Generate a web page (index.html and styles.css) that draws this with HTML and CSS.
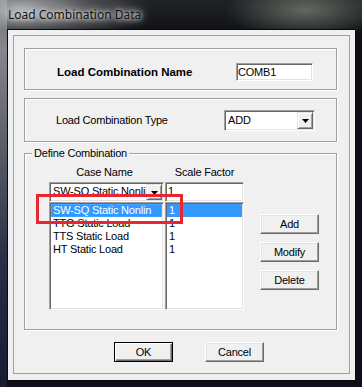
FILE: index.html
```html
<!DOCTYPE html>
<html>
<head>
	<title>Load Combination Data</title>
	<link rel="stylesheet" href="styles.css">
</head>
<body>
	<div class="window">
		<div class="titlebar">Load Combination Data</div>
		<div class="client">
			<div class="panel">
				<div class="group group-name">
					<span class="label-bold">Load Combination Name</span>
					<div class="field name-field">COMB1</div>
				</div>
				<div class="group group-type">
					<span>Load Combination Type</span>
					<div class="field combo type-combo">
						<span class="combo-text">ADD</span>
						<span class="drop-btn"><svg width="7" height="4" viewBox="0 0 7 4"><polygon points="0,0 7,0 3.5,4" fill="#000"/></svg></span>
					</div>
				</div>
				<fieldset class="define">
					<legend>Define Combination</legend>
					<div class="define-body">
						<div class="col case-col">
							<div class="col-head">Case Name</div>
							<div class="field combo case-combo">
								<span class="combo-text">SW-SQ Static Nonlin</span>
								<span class="drop-btn"><svg width="7" height="4" viewBox="0 0 7 4"><polygon points="0,0 7,0 3.5,4" fill="#000"/></svg></span>
							</div>
							<ul class="field list">
								<li class="selected focused">SW-SQ Static Nonlin</li>
								<li>TTG Static Load</li>
								<li>TTS Static Load</li>
								<li>HT Static Load</li>
							</ul>
						</div>
						<div class="col factor-col">
							<div class="col-head">Scale Factor</div>
							<div class="field factor-field">1</div>
							<ul class="field list">
								<li class="selected">1</li>
								<li>1</li>
								<li>1</li>
								<li>1</li>
							</ul>
						</div>
						<div class="side-buttons">
							<button class="btn">Add</button>
							<button class="btn">Modify</button>
							<button class="btn">Delete</button>
						</div>
					</div>
				</fieldset>
				<div class="footer">
					<button class="btn default">OK</button>
					<button class="btn">Cancel</button>
				</div>
			</div>
		</div>
		<div class="mark"></div>
	</div>
</body>
</html>
```

FILE: styles.css
```css
* {
	margin: 0;
	padding: 0;
	box-sizing: border-box;
}
body {
	background: #0e1118;
	font-family: "Liberation Sans", Arial, sans-serif;
	font-size: 11px;
	letter-spacing: -0.2px;
	color: #000;
}

/* window frame */
div.window {
	position: relative;
	width: 362px;
	height: 387px;
	padding: 0 6px 6px 7px;
	display: flex;
	flex-direction: column;
	background:
		radial-gradient(130px 42px at 20px 8px, rgba(175,177,180,.95), rgba(110,112,116,.55) 55%, transparent 100%),
		radial-gradient(80px 30px at 305px 10px, rgba(120,130,115,.75), transparent),
		linear-gradient(to bottom, #9a9c9f 0, #6a6d72 110px, #2b2e44 260px, #181a32 387px) left top / 7px 100% no-repeat,
		linear-gradient(to bottom, #202226 0, #0c0e13 40px, #0c0e1c 387px);
}
div.titlebar {
	height: 29px;
	padding: 1px 0 0 1px;
	line-height: 28px;
	font-family: "Noto Sans", "Open Sans", sans-serif;
	font-size: 12px;
	letter-spacing: 0;
	color: #111;
	text-shadow: 0 0 4px #fff, 0 0 8px rgba(255,255,255,.9), 0 0 14px rgba(255,255,255,.6);
}
div.client {
	flex: 1;
	border: 1px solid #0a0a0a;
	background: #f0f0f0;
	padding: 5px 5px 6px;
}
div.panel {
	height: 100%;
	border: 1px solid #a0a0a0;
	padding: 12px 12px 0 10px;
}

/* group boxes */
div.group {
	height: 42px;
	border: 1px solid #a0a0a0;
	box-shadow: inset 1px 1px #fff, 1px 1px #fff;
	display: flex;
	align-items: center;
	justify-content: space-between;
}
div.group-name {
	padding: 5px 23px 0 32px;
}
div.group-type {
	height: 44px;
	margin-top: 8px;
	padding: 0 21px 0 31px;
}
span.label-bold {
	font-weight: bold;
	font-size: 11.5px;
	letter-spacing: 0;
}

/* fields */
.field {
	background: #fff;
	border: 1px solid;
	border-color: #a0a0a0 #fff #fff #a0a0a0;
	box-shadow: inset 1px 1px #696969, inset -1px -1px #e3e3e3;
}
div.name-field {
	width: 77px;
	height: 18px;
	line-height: 16px;
	padding-left: 1px;
}
div.combo {
	display: flex;
	padding: 1px;
}
span.combo-text {
	flex: 1;
	padding-left: 2px;
	overflow: hidden;
	white-space: nowrap;
	line-height: 16px;
}
span.drop-btn {
	width: 16px;
	display: flex;
	align-items: center;
	justify-content: center;
	background: #f0f0f0;
	border: 1px solid;
	border-color: #e3e3e3 #696969 #696969 #e3e3e3;
	box-shadow: inset 1px 1px #fff, inset -1px -1px #a0a0a0;
}
span.drop-btn svg {
	display: block;
	margin-top: 1px;
}
div.type-combo {
	width: 91px;
	height: 21px;
}

/* define combination */
fieldset.define {
	margin-top: 4px;
	height: 184px;
	border: 1px solid #a0a0a0;
	box-shadow: inset 1px 1px #fff, 1px 1px #fff;
	min-width: 0;
}
fieldset.define legend {
	margin-left: 7px;
	padding: 0 2px;
	line-height: 14px;
	background: #f0f0f0;
}
div.define-body {
	display: flex;
	padding-left: 24px;
}
div.case-col {
	width: 115px;
}
div.factor-col {
	width: 79px;
	margin-left: 1px;
}
div.col-head {
	height: 22px;
	padding-top: 6px;
	line-height: 13px;
	text-align: center;
}
div.case-col div.col-head {
	padding-right: 4px;
}
div.case-combo {
	height: 20px;
}
div.case-combo span.combo-text {
	line-height: 15px;
}
div.factor-field {
	height: 20px;
	line-height: 17px;
	padding-left: 2px;
}
ul.list {
	list-style: none;
	height: 108px;
	padding: 1px;
}
ul.list li {
	height: 13px;
	line-height: 13px;
	padding-left: 2px;
	white-space: nowrap;
	overflow: hidden;
}
ul.list li.selected {
	background: #3399ff;
	color: #fff;
}
ul.list li.focused {
	outline: 1px dotted #e09048;
	outline-offset: -1px;
}

/* buttons */
div.side-buttons {
	margin-left: 16px;
	padding-top: 54px;
	display: flex;
	flex-direction: column;
	gap: 8px;
}
button.btn {
	width: 59px;
	height: 20px;
	font: inherit;
	letter-spacing: inherit;
	color: #000;
	background: #f0f0f0;
	border: 1px solid;
	border-color: #fff #696969 #696969 #fff;
	box-shadow: inset -1px -1px #a0a0a0, inset 1px 1px #e3e3e3;
}
button.default {
	border-color: #000;
	box-shadow: inset 1px 1px #fff, inset -1px -1px #696969, inset -2px -2px #a0a0a0;
}
div.footer {
	margin-top: 12px;
	padding-left: 90px;
	display: flex;
	gap: 32px;
}

/* red annotation */
div.mark {
	position: absolute;
	left: 36px;
	top: 194px;
	width: 147px;
	height: 30px;
	border: 3px solid #e8262f;
}
```
